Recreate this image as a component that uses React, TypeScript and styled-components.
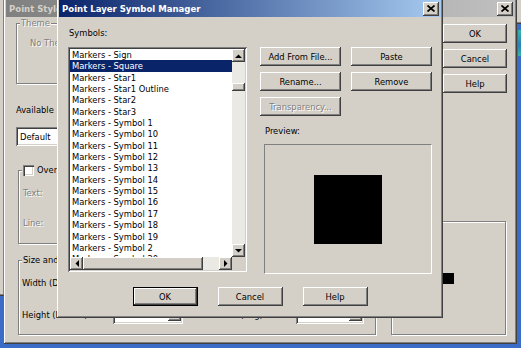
import * as React from "react";
import styled, { createGlobalStyle, css } from "styled-components";

const face = "#d4d0c8";
const uiFont = `"DejaVu Sans Condensed", "DejaVu Sans", "Liberation Sans", sans-serif`;

const GlobalStyle = createGlobalStyle`
  html, body {
    margin: 0;
    padding: 0;
  }
  body {
    background: #3a6cc8;
    font-family: ${uiFont};
    font-size: 9.3px;
    color: #000;
  }
  * {
    box-sizing: border-box;
  }
`;

const raised = css`
  box-shadow: inset -1px -1px #404040, inset 1px 1px #ffffff,
    inset -2px -2px #808080, inset 2px 2px ${face};
`;

const sunken = css`
  box-shadow: inset 1px 1px #808080, inset -1px -1px #ffffff,
    inset 2px 2px #404040, inset -2px -2px ${face};
`;

const Desktop = styled.div`
  position: relative;
  width: 521px;
  height: 348px;
  overflow: hidden;
  background: #3a6cc8;
`;

// bits of other windows peeking out at the edges
const UnderWindow = styled.div<{ $left: number; $top: number; $w: number; $h: number }>`
  position: absolute;
  left: ${({ $left }) => $left}px;
  top: ${({ $top }) => $top}px;
  width: ${({ $w }) => $w}px;
  height: ${({ $h }) => $h}px;
  background: ${face};
  ${raised}
`;

const DesktopIcon = styled.div`
  position: absolute;
  left: 518px;
  top: 30px;
  width: 8px;
  height: 26px;
  background: linear-gradient(180deg, #35b5a4, #2a7fb8 60%, #35b5a4);
`;

const Window = styled.div<{ $left: number; $w: number; $h: number }>`
  position: absolute;
  top: -2px;
  left: ${({ $left }) => $left}px;
  width: ${({ $w }) => $w}px;
  height: ${({ $h }) => $h}px;
  padding: 2px;
  background: ${face};
  ${raised}
  display: flex;
  flex-direction: column;
`;

const TitleBar = styled.div<{ $active?: boolean }>`
  flex: none;
  height: 17px;
  display: flex;
  align-items: center;
  justify-content: space-between;
  padding: 0 2px 0 3px;
  background: ${({ $active }) =>
    $active
      ? "linear-gradient(90deg, #0a246a, #a6caf0)"
      : "linear-gradient(90deg, #808080, #c0c0c0)"};
  color: ${({ $active }) => ($active ? "#ffffff" : face)};
  font-weight: bold;
  font-size: 9.5px;
  white-space: nowrap;
`;

const CloseButton = styled.div`
  width: 16px;
  height: 14px;
  flex: none;
  display: flex;
  align-items: center;
  justify-content: center;
  background: ${face};
  ${raised}
`;

const CloseIcon = () => (
  <svg width="8" height="7" viewBox="0 0 8 7">
    <path d="M0.5 0.5 L7.5 6.5 M7.5 0.5 L0.5 6.5" stroke="#000" strokeWidth="1.7" />
  </svg>
);

const Button = styled.div<{ $w: number; $default?: boolean; $disabled?: boolean }>`
  width: ${({ $w }) => $w}px;
  height: 19px;
  display: flex;
  align-items: center;
  justify-content: center;
  background: ${face};
  white-space: nowrap;
  color: ${({ $disabled }) => ($disabled ? "#808080" : "#000")};
  text-shadow: ${({ $disabled }) => ($disabled ? "1px 1px #ffffff" : "none")};
  ${({ $default }) =>
    $default
      ? css`
          box-shadow: inset 0 0 0 1px #000, inset -2px -2px #404040,
            inset 2px 2px #ffffff, inset -3px -3px #808080;
        `
      : raised}
`;

const Label = styled.div<{ $disabled?: boolean }>`
  line-height: 12px;
  white-space: nowrap;
  color: ${({ $disabled }) => ($disabled ? "#808080" : "#000")};
  text-shadow: ${({ $disabled }) => ($disabled ? "1px 1px #ffffff" : "none")};
`;

/* ---------- background dialog ---------- */

const BackBody = styled.div`
  flex: 1;
  display: grid;
  grid-template-columns: 360px 115px;
  column-gap: 15px;
  align-content: start;
  padding: 6px 0 0 10px;
`;

const FormColumn = styled.div`
  display: flex;
  flex-direction: column;
  align-items: flex-start;
`;

const GroupBox = styled.div<{ $w: number; $h: number; $inset?: number }>`
  position: relative;
  width: ${({ $w }) => $w}px;
  height: ${({ $h }) => $h}px;
  margin-left: ${({ $inset }) => $inset ?? 0}px;
  border: 1px solid #808080;
  box-shadow: inset 1px 1px #ffffff, 1px 1px #ffffff;
`;

const GroupCaption = styled.div<{ $disabled?: boolean }>`
  position: absolute;
  top: -7px;
  left: 3px;
  padding: 0 1px;
  display: flex;
  align-items: center;
  gap: 3px;
  line-height: 12px;
  background: ${face};
  white-space: nowrap;
  color: ${({ $disabled }) => ($disabled ? "#808080" : "#000")};
  text-shadow: ${({ $disabled }) => ($disabled ? "1px 1px #ffffff" : "none")};
`;

const GroupInner = styled.div<{ $top: number; $left: number }>`
  padding: ${({ $top, $left }) => `${$top}px 0 0 ${$left}px`};
  display: flex;
  flex-direction: column;
  gap: 18px;
`;

const CheckBox = styled.div`
  width: 11px;
  height: 11px;
  background: #fff;
  box-shadow: inset 1px 1px #808080, inset 2px 2px #404040,
    inset -1px -1px #ffffff, inset -2px -2px ${face};
`;

const Combo = styled.div<{ $w: number; $h: number }>`
  width: ${({ $w }) => $w}px;
  height: ${({ $h }) => $h}px;
  display: flex;
  align-items: center;
  justify-content: space-between;
  padding: 2px;
  background: #fff;
  ${sunken}
`;

const ComboText = styled.span`
  padding-left: 2px;
`;

const SizeGrid = styled.div`
  display: grid;
  grid-template-columns: 91px 70px 113px 68px;
  grid-auto-rows: 20px;
  row-gap: 12px;
  align-items: center;
  padding: 11px 0 0 3px;
`;

const GridLabel = styled.div<{ $pad?: number }>`
  padding-left: ${({ $pad }) => $pad ?? 0}px;
  white-space: nowrap;
  overflow: hidden;
`;

const ActionColumn = styled.div`
  display: flex;
  flex-direction: column;
  align-items: flex-end;
  gap: 6px;
  padding-top: 1px;
  margin-right: -1px;
`;

const PreviewGroup = styled.div`
  margin-top: auto;
  margin-right: 1px;
  align-self: stretch;
  height: 114px;
  display: flex;
  align-items: center;
  justify-content: center;
  border: 1px solid #808080;
  box-shadow: inset 1px 1px #ffffff, 1px 1px #ffffff;
`;

const Swatch = styled.div<{ $w: number; $h: number }>`
  width: ${({ $w }) => $w}px;
  height: ${({ $h }) => $h}px;
  background: #000;
`;

/* ---------- symbol manager ---------- */

const FrontBody = styled.div`
  flex: 1;
  display: flex;
  flex-direction: column;
  padding: 10px 9px 0 9px;
`;

const MainRow = styled.div`
  display: flex;
  align-items: flex-start;
  gap: 13px;
`;

const ListColumn = styled.div`
  width: 179px;
  display: flex;
  flex-direction: column;
`;

const ListLabel = styled(Label)`
  margin-left: 1px;
`;

const ListBox = styled.div`
  margin-top: 8px;
  height: 225px;
  padding: 2px;
  background: #fff;
  ${sunken}
  display: grid;
  grid-template-columns: 1fr 13px;
  grid-template-rows: 1fr 13px;
`;

const ListItems = styled.div`
  overflow: hidden;
`;

const ListItem = styled.div<{ $selected?: boolean }>`
  height: 11.35px;
  line-height: 11.35px;
  padding-left: 2px;
  white-space: nowrap;
  background: ${({ $selected }) => ($selected ? "#0a246a" : "transparent")};
  color: ${({ $selected }) => ($selected ? "#ffffff" : "#000")};
`;

const ScrollTrack = styled.div<{ $vertical?: boolean }>`
  display: flex;
  flex-direction: ${({ $vertical }) => ($vertical ? "column" : "row")};
  background: #ebe9e4;
`;

const ScrollButton = styled.div`
  flex: none;
  width: 13px;
  height: 13px;
  display: flex;
  align-items: center;
  justify-content: center;
  background: ${face};
  ${raised}
`;

const ScrollThumb = styled.div<{ $vertical?: boolean; $size: number; $offset: number }>`
  flex: none;
  width: ${({ $vertical, $size }) => ($vertical ? 13 : $size)}px;
  height: ${({ $vertical, $size }) => ($vertical ? $size : 13)}px;
  margin-top: ${({ $vertical, $offset }) => ($vertical ? $offset : 0)}px;
  margin-left: ${({ $vertical, $offset }) => ($vertical ? 0 : $offset)}px;
  margin-bottom: ${({ $vertical }) => ($vertical ? "auto" : "0")};
  margin-right: ${({ $vertical }) => ($vertical ? "0" : "auto")};
  background: ${face};
  ${raised}
`;

const ScrollCorner = styled.div`
  background: ${face};
`;

const arrowPoints = {
  up: "0,4 7,4 3.5,0.5",
  down: "0,0 7,0 3.5,3.5",
  left: "4,0 4,7 0.5,3.5",
  right: "0,0 0,7 3.5,3.5",
};

const Arrow = ({ dir }: { dir: keyof typeof arrowPoints }) => {
  const horizontal = dir === "left" || dir === "right";
  return (
    <svg width={horizontal ? 4 : 7} height={horizontal ? 7 : 4}>
      <polygon points={arrowPoints[dir]} fill="#000" />
    </svg>
  );
};

const SideColumn = styled.div`
  width: 172px;
  padding-top: 20px;
  display: flex;
  flex-direction: column;
`;

const ButtonGrid = styled.div`
  display: grid;
  grid-template-columns: 81px 81px;
  gap: 6px 10px;
`;

const PreviewLabel = styled(Label)`
  margin: 9px 0 0 5px;
`;

const PreviewBox = styled.div`
  margin: 7px 0 0 4px;
  width: 168px;
  height: 130px;
  display: flex;
  align-items: center;
  justify-content: center;
  border-top: 1px solid #808080;
  border-left: 1px solid #808080;
  border-bottom: 1px solid #ffffff;
  border-right: 1px solid #ffffff;
`;

const ButtonRow = styled.div`
  margin-top: 13px;
  display: flex;
  justify-content: center;
  gap: 20px;
`;

const symbols = [
  "Markers - Sign",
  "Markers - Square",
  "Markers - Star1",
  "Markers - Star1 Outline",
  "Markers - Star2",
  "Markers - Star3",
  "Markers - Symbol 1",
  "Markers - Symbol 10",
  "Markers - Symbol 11",
  "Markers - Symbol 12",
  "Markers - Symbol 13",
  "Markers - Symbol 14",
  "Markers - Symbol 15",
  "Markers - Symbol 16",
  "Markers - Symbol 17",
  "Markers - Symbol 18",
  "Markers - Symbol 19",
  "Markers - Symbol 2",
  "Markers - Symbol 20",
];

const DropCombo = ({ w }: { w: number }) => (
  <Combo $w={w} $h={20}>
    <span />
    <ScrollButton>
      <Arrow dir="down" />
    </ScrollButton>
  </Combo>
);

export default function App() {
  const selected = "Markers - Square";
  return (
    <Desktop>
      <GlobalStyle />
      <UnderWindow $left={-100} $top={-4} $w={105} $h={300} />
      <UnderWindow $left={516} $top={-4} $w={30} $h={28} />
      <DesktopIcon />

      <Window $left={4} $w={513} $h={346}>
        <TitleBar>
          <span>Point Style</span>
          <CloseButton>
            <CloseIcon />
          </CloseButton>
        </TitleBar>
        <BackBody>
          <FormColumn>
            <GroupBox $w={330} $h={61}>
              <GroupCaption $disabled>Theme</GroupCaption>
              <GroupInner $top={13} $left={13}>
                <Label $disabled>No Theme</Label>
              </GroupInner>
            </GroupBox>
            <Label style={{ marginTop: 20 }}>Available</Label>
            <Combo $w={180} $h={19} style={{ marginTop: 11 }}>
              <ComboText>Default</ComboText>
            </Combo>
            <GroupBox $w={340} $h={74} $inset={2} style={{ marginTop: 24 }}>
              <GroupCaption>
                <CheckBox />
                Override
              </GroupCaption>
              <GroupInner $top={16} $left={4}>
                <Label $disabled>Text:</Label>
                <Label $disabled>Line:</Label>
              </GroupInner>
            </GroupBox>
            <GroupBox $w={358} $h={75} $inset={2} style={{ marginTop: 16 }}>
              <GroupCaption>Size and</GroupCaption>
              <SizeGrid>
                <GridLabel>Width (Device)</GridLabel>
                <DropCombo w={70} />
                <GridLabel $pad={20}>Offset</GridLabel>
                <DropCombo w={68} />
                <GridLabel>Height (Device)</GridLabel>
                <DropCombo w={70} />
                <GridLabel $pad={20}>Rotation (deg)</GridLabel>
                <DropCombo w={68} />
              </SizeGrid>
            </GroupBox>
          </FormColumn>
          <ActionColumn>
            <Button $w={64}>OK</Button>
            <Button $w={64}>Cancel</Button>
            <Button $w={64}>Help</Button>
            <PreviewGroup>
              <Swatch $w={11} $h={11} />
            </PreviewGroup>
          </ActionColumn>
        </BackBody>
      </Window>

      <Window $left={57} $w={386} $h={320}>
        <TitleBar $active>
          <span>Point Layer Symbol Manager</span>
          <CloseButton>
            <CloseIcon />
          </CloseButton>
        </TitleBar>
        <FrontBody>
          <MainRow>
            <ListColumn>
              <ListLabel>Symbols:</ListLabel>
              <ListBox>
                <ListItems>
                  {symbols.map((name) => (
                    <ListItem key={name} $selected={name === selected}>
                      {name}
                    </ListItem>
                  ))}
                </ListItems>
                <ScrollTrack $vertical>
                  <ScrollButton>
                    <Arrow dir="up" />
                  </ScrollButton>
                  <ScrollThumb $vertical $size={8} $offset={21} />
                  <ScrollButton>
                    <Arrow dir="down" />
                  </ScrollButton>
                </ScrollTrack>
                <ScrollTrack>
                  <ScrollButton>
                    <Arrow dir="left" />
                  </ScrollButton>
                  <ScrollThumb $size={120} $offset={0} />
                  <ScrollButton>
                    <Arrow dir="right" />
                  </ScrollButton>
                </ScrollTrack>
                <ScrollCorner />
              </ListBox>
            </ListColumn>
            <SideColumn>
              <ButtonGrid>
                <Button $w={81}>Add From File...</Button>
                <Button $w={81}>Paste</Button>
                <Button $w={81}>Rename...</Button>
                <Button $w={81}>Remove</Button>
                <Button $w={81} $disabled>
                  Transparency...
                </Button>
              </ButtonGrid>
              <PreviewLabel>Preview:</PreviewLabel>
              <PreviewBox>
                <Swatch $w={68} $h={69} />
              </PreviewBox>
            </SideColumn>
          </MainRow>
          <ButtonRow>
            <Button $w={65} $default>
              OK
            </Button>
            <Button $w={65}>Cancel</Button>
            <Button $w={65}>Help</Button>
          </ButtonRow>
        </FrontBody>
      </Window>
    </Desktop>
  );
}
